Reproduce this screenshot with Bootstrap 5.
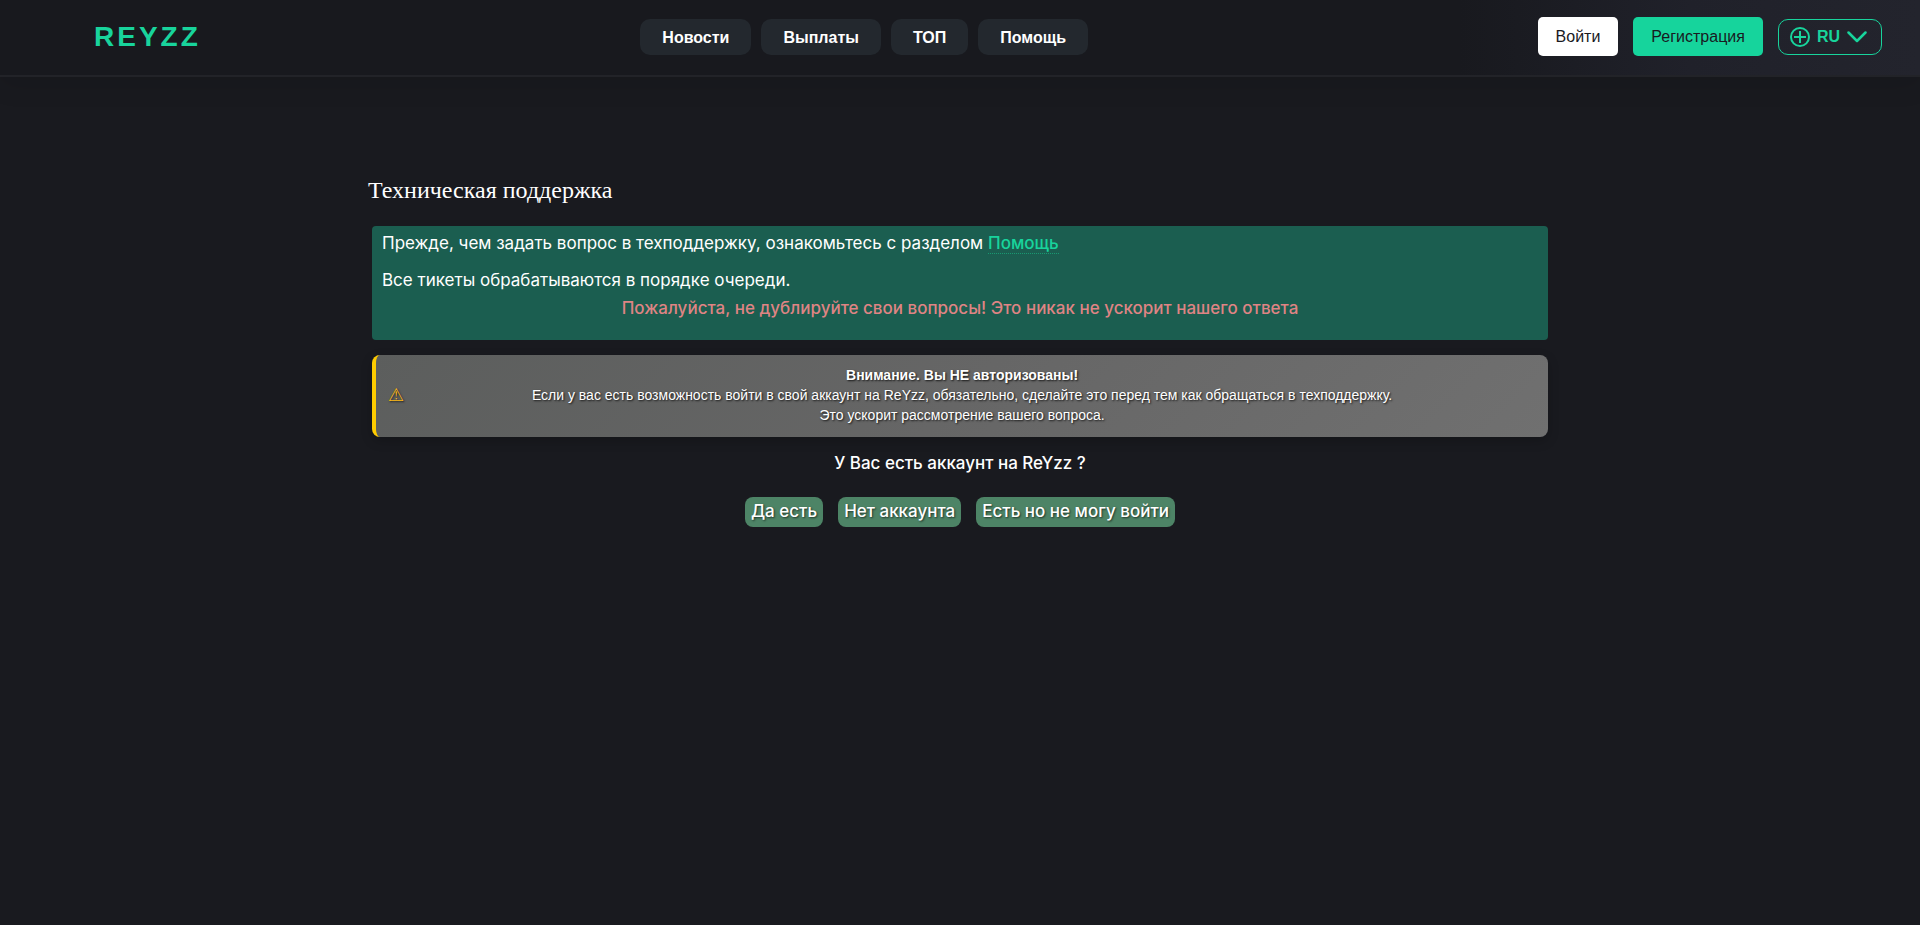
<!DOCTYPE html>
<html lang="ru" data-bs-theme="dark">
<head>
<meta charset="utf-8">
<meta name="viewport" content="width=device-width, initial-scale=1">
<title>Техническая поддержка</title>
<link href="https://cdn.jsdelivr.net/npm/bootstrap@5.3.0/dist/css/bootstrap.min.css" rel="stylesheet">
<style>
body { background: #191a1f; color: #fff; font: 17px/24px Inter, sans-serif; }
.site-header { min-height: 77px; padding: 0 38px 2px 94px; background: linear-gradient(90deg, #18191e 76%, #20212a 88%, #23242d); border-bottom: 2px solid #222328; box-shadow: 0 8px 24px rgba(0, 0, 0, .1); font: 16px/24px "Liberation Sans", sans-serif; }
.brand { color: #18d49c; font-size: 28px; font-weight: 700; letter-spacing: 3px; }
.site-nav { gap: 10px; margin-right: 10px; }
.site-nav a { color: #fff; background: #23282e; font-weight: 700; padding: 7px 22px 5px; border-radius: 10px; }
.account { gap: 15px; }
.account .btn { --bs-btn-padding-x: 17px; --bs-btn-padding-y: 6px; --bs-btn-border-radius: 5px; --bs-btn-color: #191a1f; --bs-btn-bg: #fff; --bs-btn-line-height: 25px; }
.account .btn.join { --bs-btn-bg: #16d49c; }
.lang { color: #18d49c; background: transparent; border: 1px solid #18d49c; border-radius: 10px; padding: 5px 14px 5px 11px; font-weight: 700; gap: 7px; }
.support { max-width: 1184px; padding-top: 97px; }
.support h1 { font: 24px/32px "Liberation Serif", serif; margin-bottom: 20px; }
.rules { background: #1b5e50; border-radius: 4px; padding: 5px 10px 20px; margin: 0 4px 15px; }
.rules p { margin-bottom: 13px; }
.rules p.second { margin-bottom: 4px; }
.rules a { color: #18d49c; font-weight: 500; border-bottom: 1px dotted #189972; }
.rules strong { color: #df8484; font-weight: 500; }
.warning { min-height: 82px; margin: 0 4px 14px; padding: 10px 12px 12px; border-left: 4px solid #fc0; border-radius: 8px; background: linear-gradient(135deg, #5c5e5d, #666 50%, #707070); box-shadow: 0 4px 12px rgba(0, 0, 0, .2); font: 14px/20px "Liberation Sans", sans-serif; text-shadow: 1px 1px 2px rgba(0, 0, 0, .8); }
.warning .sign { color: #fdb813; font: 18px/20px "DejaVu Sans", sans-serif; }
.warning .message { padding-right: 16px; }
.question { font-weight: 500; margin-bottom: 22px; }
.answers { gap: 15px; }
.answers button { color: #fff; background: #4d8466; border: 0; border-radius: 8px; padding: 2px 6px 4px; font-weight: 500; text-shadow: 1px 1px 2px rgba(0, 0, 0, .6); }
</style>
</head>
<body>
<header class="site-header d-flex align-items-center justify-content-between">
  <a class="brand text-decoration-none" href="#">REYZZ</a>
  <nav class="site-nav d-flex">
    <a class="text-decoration-none" href="#">Новости</a>
    <a class="text-decoration-none" href="#">Выплаты</a>
    <a class="text-decoration-none" href="#">ТОП</a>
    <a class="text-decoration-none" href="#">Помощь</a>
  </nav>
  <div class="account d-flex align-items-center">
    <button class="btn" type="button">Войти</button>
    <button class="btn join" type="button">Регистрация</button>
    <button class="lang d-flex align-items-center" type="button">
      <svg width="20" height="20" viewBox="0 0 20 20" fill="none" stroke="currentColor" stroke-width="2" aria-hidden="true"><circle cx="10" cy="10" r="9"/><path d="M10 4v12M4 10h12"/></svg>
      RU
      <svg width="20" height="12" viewBox="0 0 20 12" fill="none" stroke="currentColor" stroke-width="2.5" stroke-linecap="round" stroke-linejoin="round" aria-hidden="true"><path d="M1.5 1.5 10 10l8.500-8.500"/></svg>
    </button>
  </div>
</header>
<main class="support mx-auto">
  <h1>Техническая поддержка</h1>
  <section class="rules">
    <p>Прежде, чем задать вопрос в техподдержку, ознакомьтесь с разделом <a class="text-decoration-none" href="#">Помощь</a></p>
    <p class="second">Все тикеты обрабатываются в порядке очереди.</p>
    <div class="text-center"><strong>Пожалуйста, не дублируйте свои вопросы! Это никак не ускорит нашего ответа</strong></div>
  </section>
  <section class="warning d-flex align-items-center">
    <span class="sign">⚠</span>
    <div class="message flex-grow-1 text-center"><b>Внимание. Вы НЕ авторизованы!</b><br>Если у вас есть возможность войти в свой аккаунт на ReYzz, обязательно, сделайте это перед тем как обращаться в техподдержку.<br>Это ускорит рассмотрение вашего вопроса.</div>
  </section>
  <p class="question text-center">У Вас есть аккаунт на ReYzz ?</p>
  <div class="answers d-flex justify-content-center">
    <button type="button">Да есть</button>
    <button type="button">Нет аккаунта</button>
    <button type="button">Есть но не могу войти</button>
  </div>
</main>
<script src="https://cdn.jsdelivr.net/npm/bootstrap@5.3.0/dist/js/bootstrap.bundle.min.js"></script>
</body>
</html>
